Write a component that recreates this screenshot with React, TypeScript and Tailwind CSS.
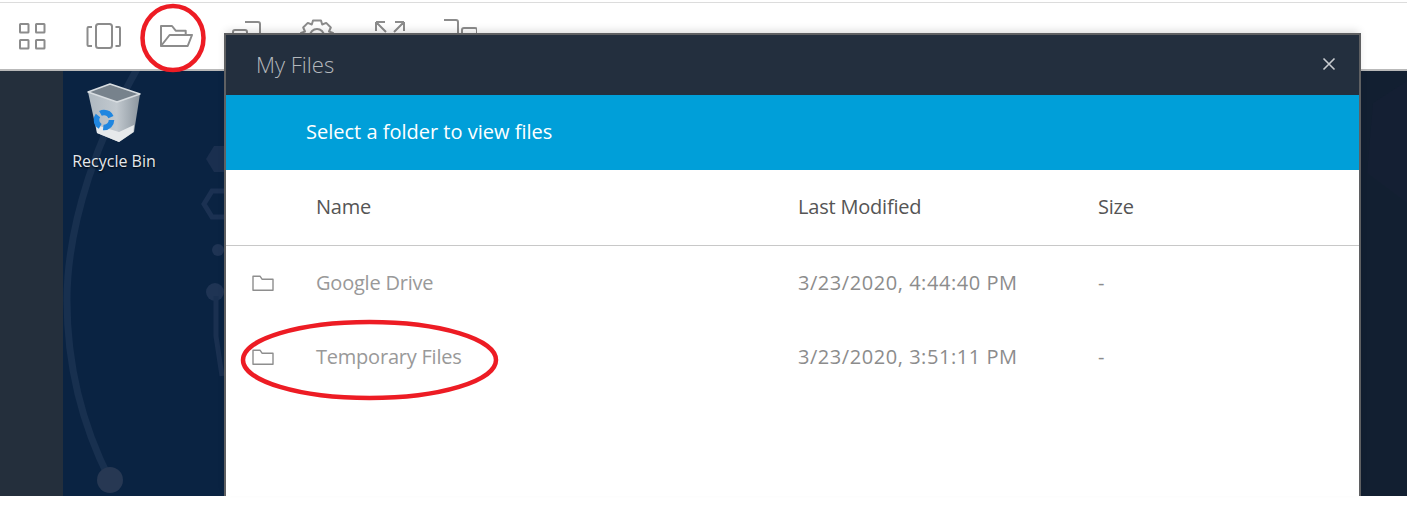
import React from "react";

const font = { fontFamily: '"Open Sans", sans-serif' };

function ToolIcon({ children }: { children: React.ReactNode }) {
  return (
    <svg width="36" height="36" viewBox="0 0 36 36" fill="none" stroke="#8c8c8c" strokeWidth="2" className="shrink-0">
      {children}
    </svg>
  );
}

function FolderIcon() {
  return (
    <svg width="24" height="20" viewBox="0 0 24 20" fill="none" stroke="#8e8e8e" strokeWidth="1.4" className="shrink-0">
      <path d="M2 17.3V3.2h7l2 3h11v11.1z" strokeLinejoin="round" />
    </svg>
  );
}

function Row({ name, date }: { name: string; date: string }) {
  return (
    <div className="flex h-[74px] items-center text-[20px] text-[#999999]">
      <div className="flex w-[90px] shrink-0 pl-[25px]">
        <FolderIcon />
      </div>
      <div className="w-[482px] shrink-0 tracking-[-0.22px]">{name}</div>
      <div className="w-[300px] shrink-0 tracking-[0.55px] text-[#8c8c8c]">{date}</div>
      <div className="text-[#8c8c8c]">-</div>
    </div>
  );
}

export default function App() {
  return (
    <div className="relative h-[506px] w-[1413px] overflow-hidden bg-white" style={font}>
      <div className="flex h-[496px] w-[1407px] flex-col">
        <div className="mt-[2px] h-[1px] shrink-0 bg-[#dcdcdc]" />
        <div className="box-content flex h-[66px] shrink-0 items-center gap-[35px] border-b-2 border-[#b9b9b9] pl-[15px]">
          <ToolIcon>
            <rect x="5" y="6" width="8.5" height="8.5" rx="0.5" />
            <rect x="21" y="6" width="8.5" height="8.5" rx="0.5" />
            <rect x="5" y="22" width="8.5" height="8.5" rx="0.5" />
            <rect x="21" y="22" width="8.5" height="8.5" rx="0.5" />
          </ToolIcon>
          <ToolIcon>
            <rect x="10" y="6" width="16" height="24" rx="2.5" />
            <path d="M6 9H2.5a1 1 0 0 0-1 1v17a1 1 0 0 0 1 1H6M29.5 9H33a1 1 0 0 1 1 1v17a1 1 0 0 1-1 1h-3.5" />
          </ToolIcon>
          <ToolIcon>
            <path d="M4 28V8h11l3.7 4.7h10V17" strokeLinejoin="round" />
            <path d="M4 28h26.7L35 17H12.6z" strokeLinejoin="round" />
          </ToolIcon>
          <ToolIcon>
            <path d="M17 4h13a2 2 0 0 1 2 2v22h-15" />
            <rect x="5" y="12" width="14" height="20" rx="2" />
          </ToolIcon>
          <ToolIcon>
            <path d="M14 2.5h8l1.2 4 4-1.6 4.6 4.6-1.8 4 4 1.4v7l-4 1.4 1.8 4-4.6 4.6-4-1.8-1.2 4h-8l-1.2-4-4 1.8-4.6-4.6 1.8-4-4-1.4v-7l4-1.4-1.8-4 4.6-4.6 4 1.6z" strokeLinejoin="round" />
            <circle cx="18" cy="18" r="7" />
          </ToolIcon>
          <ToolIcon>
            <path d="M6 4v9M6 4h9M6 4l10 10M34 4v9M34 4h-9M34 4L24 14" />
          </ToolIcon>
          <ToolIcon>
            <path d="M3 2h12a2 2 0 0 1 2 2v26" />
            <rect x="21" y="10" width="15" height="20" rx="2" />
          </ToolIcon>
        </div>
        <div className="flex min-h-0 flex-1">
          <div className="w-[63px] shrink-0 bg-[#242f3c]" />
          <div className="relative flex-1 overflow-hidden bg-[#0a2342]">
            <svg className="absolute left-0 top-0" width="1344" height="425" viewBox="0 0 1344 425" fill="none">
              <path d="M74 -2C38 60 4 150 4 229C4 300 22 360 47 409" stroke="#18304f" strokeWidth="7" />
              <circle cx="47" cy="409" r="13" fill="#273853" />
              <path d="M143 88l8-13h16l8 13-8 13h-16z" fill="#1a2f4f" />
              <path d="M141 133l8-13h16l8 13-8 13h-16z" stroke="#1b3152" strokeWidth="5" />
              <circle cx="155" cy="179" r="6" fill="#1f3454" />
              <circle cx="152" cy="221" r="9" fill="#1f3454" />
              <path d="M153 225v40l6 40" stroke="#1a3050" strokeWidth="5" />
              <rect x="1298" y="0" width="46" height="425" fill="#121f31" />
              <path d="M1344 10l-34 22-6 70 40 30" fill="#141f33" />
            </svg>
            <div className="relative ml-[6px] mt-[11px] flex w-[90px] flex-col items-center">
              <svg width="58" height="62" viewBox="0 0 58 62">
                <defs>
                  <linearGradient id="binBody" x1="0" y1="0" x2="1" y2="0">
                    <stop offset="0" stopColor="#aeb8c0" />
                    <stop offset="0.55" stopColor="#c2c9cf" />
                    <stop offset="1" stopColor="#8b959e" />
                  </linearGradient>
                </defs>
                <path d="M3 10L25 2l30 10-6 38-15 10-22-9z" fill="url(#binBody)" />
                <path d="M3 10L25 2l30 10-23 8z" fill="#77828c" stroke="#d8dde1" strokeWidth="1.5" strokeLinejoin="round" />
                <path d="M11 43l23 7 15-7-.5 7L34 60l-22-9z" fill="#e6e9eb" />
                <circle cx="19" cy="38" r="7.5" fill="none" stroke="#1f86e0" strokeWidth="5.5" strokeDasharray="12.5 3.2" />
              </svg>
              <div className="mt-[8px] text-[16px] leading-[18px] text-[#e4e8ed] [text-shadow:0_1px_2px_#000]">Recycle Bin</div>
            </div>
          </div>
        </div>
      </div>

      <div className="absolute left-[224px] top-[33px] h-[463px] w-[1137px] border-x-2 border-t-2 border-[#5f6062] bg-white shadow-[0_-4px_8px_-2px_rgba(0,0,0,0.15)]">
        <div className="flex h-[60px] items-center justify-between bg-[#232f3e] pb-[2px] pl-[30px] pr-[23px] text-[22px] font-light text-[#b4b8bc]">
          <span>My Files</span>
          <svg width="14" height="14" viewBox="0 0 14 14" stroke="#c9ccd0" strokeWidth="1.6">
            <path d="M1.5 1.5l11 11M12.5 1.5l-11 11" />
          </svg>
        </div>
        <div className="flex h-[75px] items-center bg-[#009fd9] pb-[2px] pl-[80px] text-[20px] text-white">
          Select a folder to view files
        </div>
        <div className="flex h-[76px] items-center border-b border-[#c8c8c8] pb-[2px] text-[20px] tracking-[-0.2px] text-[#555555]">
          <div className="w-[90px] shrink-0" />
          <div className="w-[482px] shrink-0">Name</div>
          <div className="w-[300px] shrink-0">Last Modified</div>
          <div>Size</div>
        </div>
        <Row name="Google Drive" date="3/23/2020, 4:44:40 PM" />
        <Row name="Temporary Files" date="3/23/2020, 3:51:11 PM" />
      </div>

      <svg className="pointer-events-none absolute left-0 top-0" width="1413" height="506" fill="none" stroke="#ed1c24" strokeWidth="4.5">
        <ellipse cx="173" cy="38" rx="30.5" ry="32" />
        <ellipse cx="369.5" cy="360" rx="126.5" ry="38" />
      </svg>
    </div>
  );
}
